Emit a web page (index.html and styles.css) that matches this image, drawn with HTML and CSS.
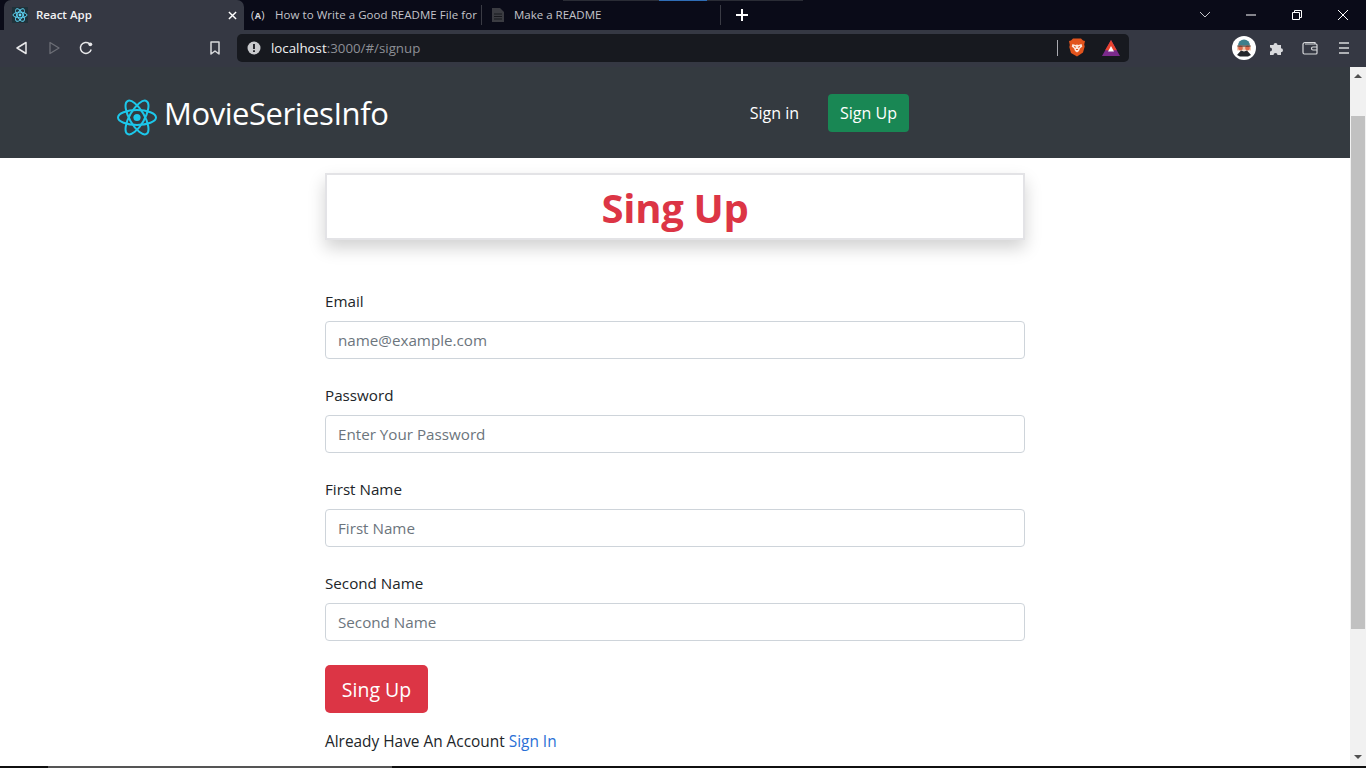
FILE: index.html
```html
<!DOCTYPE html>
<html lang="en">
<head>
<meta charset="utf-8">
<title>React App</title>
<link rel="stylesheet" href="styles.css">
</head>
<body>
<header class="chrome">
  <span class="peek"><span class="peek-blue"></span></span>
  <div class="tabstrip">
    <div class="tab active">
      <svg class="favicon" viewBox="0 0 16 16"><rect width="16" height="16" fill="#20323a"/><g fill="none" stroke="#61dafb" stroke-width=".9"><ellipse cx="8" cy="8" rx="7" ry="2.8"/><ellipse cx="8" cy="8" rx="7" ry="2.8" transform="rotate(60 8 8)"/><ellipse cx="8" cy="8" rx="7" ry="2.8" transform="rotate(120 8 8)"/></g><circle cx="8" cy="8" r="1.4" fill="#61dafb"/></svg>
      <span class="tab-title">React App</span>
      <svg class="tab-close" viewBox="0 0 10 10"><path d="M1 1l8 8M9 1l-8 8" stroke="#fff" stroke-width="1.6"/></svg>
    </div>
    <div class="tab tab-two">
      <span class="fcc">(<b>A</b>)</span>
      <span class="tab-title">How to Write a Good README File for</span>
    </div>
    <div class="tab tab-three">
      <svg class="doc" viewBox="0 0 12 14"><path d="M0 0h8l4 4v10H0z" fill="#3b3c42"/><path d="M2 6h8M2 8.500h8M2 11h8" stroke="#17181d" stroke-width="1"/></svg>
      <span class="tab-title">Make a README</span>
    </div>
    <svg class="newtab" viewBox="0 0 12 12"><path d="M6 0v12M0 6h12" stroke="#fff" stroke-width="2"/></svg>
    <div class="strip-space"></div>
    <svg class="win chev" viewBox="0 0 12 8"><path d="M1 1l5 5 5-5" fill="none" stroke="#c5c6ca" stroke-width="1"/></svg>
    <svg class="win" viewBox="0 0 12 12"><path d="M1 6h10" stroke="#fff" stroke-width="1"/></svg>
    <svg class="win" viewBox="0 0 12 12"><path d="M1.500 3.500h7v7h-7zM3.500 3.500v-2h7v7h-2" fill="none" stroke="#fff" stroke-width="1"/></svg>
    <svg class="win" viewBox="0 0 12 12"><path d="M1 1l10 10M11 1L1 11" stroke="#fff" stroke-width="1"/></svg>
  </div>
  <div class="toolbar">
    <svg class="tool back" viewBox="0 0 16 16"><path d="M12 2.500v11L3 8z" fill="none" stroke="#e8e8ea" stroke-width="1.500" stroke-linejoin="round"/></svg>
    <svg class="tool fwd" viewBox="0 0 16 16"><path d="M4 2.500v11L13 8z" fill="none" stroke="#6c6e76" stroke-width="1.300" stroke-linejoin="round"/></svg>
    <svg class="tool reload" viewBox="0 0 16 16"><path d="M13.200 9.500A5.500 5.500 0 1 1 11.500 3.700" fill="none" stroke="#e8e8ea" stroke-width="1.500"/><circle cx="12.300" cy="4.300" r="1.900" fill="#e8e8ea"/></svg>
    <svg class="tool bookmark" viewBox="0 0 16 16"><path d="M4 2h8v12l-4-3-4 3z" fill="none" stroke="#d8d9dc" stroke-width="1.500" stroke-linejoin="round"/></svg>
    <div class="omnibox">
      <svg class="info" viewBox="0 0 14 14"><circle cx="7" cy="7" r="6.500" fill="#c9cacd"/><path d="M7 3v5M7 9.300v1.600" stroke="#17181d" stroke-width="1.800"/></svg>
      <span class="url"><span class="host">localhost</span>:3000/#/signup</span>
      <span class="divider"></span>
      <svg class="brave" viewBox="0 0 16 18"><path d="M4 0h8l2 2 2 .5-.8 3.500.5 2-1.700 6L8 18l-6-3.500-1.700-6 .5-2L0 2.500 2 2z" fill="#e2541d"/><path d="M3.500 5.500L6.500 6.500 8 6l1.500.5 3-1 .8 2.500-2.300 2-1 2.500L8 14l-2-1.500-1-2.500-2.300-2z" fill="#fbe6dc"/><path d="M5 8l2 .8M11 8l-2 .8M7 11h2" stroke="#e2541d" stroke-width="1"/></svg>
      <svg class="bat" viewBox="0 0 18 16"><path d="M9 0l9 16H0z" fill="#7b2a8c"/><path d="M9 0l5.800 10.300H3.200z" fill="#e8432e"/><path d="M9 6l3 5.500H6z" fill="#fff"/></svg>
    </div>
    <div class="avatar">
      <svg viewBox="0 0 24 24"><circle cx="12" cy="12" r="12" fill="#fff"/><path d="M6 9.500a6 6 0 0 1 12 0z" fill="#3f7f8c"/><rect x="5" y="9.500" width="14" height="5" fill="#f1c9b0"/><circle cx="8.500" cy="12" r="2.400" fill="#dc6a4c"/><circle cx="15.500" cy="12" r="2.400" fill="#dc6a4c"/><path d="M5.500 10h13" stroke="#23262b" stroke-width="1"/><path d="M5 19l4-4.500 3 1 3-1 4 4.500-3 1.500H8z" fill="#23262b"/></svg>
    </div>
    <svg class="tool puzzle" viewBox="0 0 16 16"><path d="M1 5h3.500a2 2 0 1 1 4 0H12v3.300a2 2 0 1 1 0 4V15H8.500a2 2 0 1 0-4 0H1v-3.500a2 2 0 1 0 0-4z" fill="#d8d9dc"/></svg>
    <svg class="tool wallet" viewBox="0 0 16 14"><path d="M13 3V1.500H3A2 2 0 0 0 1 3.500v8a1.500 1.500 0 0 0 1.500 1.500H14a1 1 0 0 0 1-1V4a1 1 0 0 0-1-1H3" fill="none" stroke="#d8d9dc" stroke-width="1.200"/><path d="M15 6h-4a1.500 1.500 0 0 0 0 3h4" fill="none" stroke="#d8d9dc" stroke-width="1.200"/></svg>
    <svg class="tool menu" viewBox="0 0 12 14"><path d="M1 2h10M1 7h10M1 12h10" stroke="#d8d9dc" stroke-width="1.700"/></svg>
  </div>
</header>
<div class="viewport">
  <main class="page">
    <nav class="navbar">
      <a class="brand">
        <svg class="logo" viewBox="0 0 40 36"><g fill="none" stroke="#1cc7ea" stroke-width="2"><ellipse cx="20" cy="18" rx="19" ry="7.400"/><ellipse cx="20" cy="18" rx="19" ry="7.400" transform="rotate(60 20 18)"/><ellipse cx="20" cy="18" rx="19" ry="7.400" transform="rotate(120 20 18)"/></g><circle cx="20" cy="18" r="3.600" fill="#1cc7ea"/></svg>
        <span class="brand-name">MovieSeriesInfo</span>
      </a>
      <a class="nav-link">Sign in</a>
      <a class="nav-btn">Sign Up</a>
    </nav>
    <section class="content">
      <h1 class="heading">Sing Up</h1>
      <form class="form">
        <div class="field">
          <label class="label">Email</label>
          <input class="input" type="email" placeholder="name@example.com">
        </div>
        <div class="field">
          <label class="label">Password</label>
          <input class="input" type="password" placeholder="Enter Your Password">
        </div>
        <div class="field">
          <label class="label">First Name</label>
          <input class="input" type="text" placeholder="First Name">
        </div>
        <div class="field">
          <label class="label">Second Name</label>
          <input class="input" type="text" placeholder="Second Name">
        </div>
        <button class="submit" type="button">Sing Up</button>
        <p class="switch">Already Have An Account <a class="switch-link">Sign In</a></p>
      </form>
    </section>
  </main>
  <aside class="scrollbar">
    <span class="arrow up"></span>
    <span class="thumb"></span>
    <span class="arrow down"></span>
  </aside>
</div>
<footer class="taskbar"><span class="task-light"></span></footer>
</body>
</html>
```
FILE: styles.css
```css
* { box-sizing: border-box; }
html, body { margin: 0; height: 768px; overflow: hidden; }
body { font-family: "Open Sans", "Noto Sans", sans-serif; background: #fff; color: #212529; display: flex; flex-direction: column; }
svg { display: block; flex: none; }

.chrome { height: 67px; flex: none; background: #353843; position: relative; }
.peek { position: absolute; top: 0; left: 563px; width: 240px; height: 1px; background: #2a2c35; }
.peek-blue { position: absolute; top: 0; left: 96px; width: 48px; height: 1px; background: #2f6db5; }
.tabstrip { height: 30px; background: #0a0b18; display: flex; align-items: center; padding-left: 4px; }
.tab { height: 30px; display: flex; align-items: center; font-size: 12px; color: #c4c4ca; white-space: nowrap; }
.tab.active { width: 240px; background: #353843; border-radius: 7px 7px 0 0; padding: 0 7px 0 8px; color: #f2f2f4; font-weight: 600; }
.favicon { width: 16px; height: 16px; margin-right: 8px; }
.tab-title { flex: 1; font-size: 11.500px; line-height: 16px; margin-top: -1px; }
.tab-close { width: 9px; height: 9px; }
.tab-two { width: 238px; padding-left: 7px; padding-right: 3px; border-right: 1px solid #3a3b44; height: 20px; }
.tab-two .tab-title { letter-spacing: .05px; }
.fcc { font-size: 11px; width: 24px; flex: none; color: #d8d8dc; letter-spacing: .4px; margin-top: -1px; }
.fcc b { font-size: 9px; }
.tab-three { width: 239px; padding-left: 10px; border-right: 1px solid #3a3b44; height: 20px; }
.doc { width: 12px; height: 14px; margin-right: 10px; }
.newtab { width: 12px; height: 12px; margin-left: 15px; }
.strip-space { flex: 1; }
.win { width: 12px; height: 12px; margin-right: 34px; }
.chev { margin-right: 34px; }
.win:last-child { margin-right: 17px; }

.toolbar { height: 37px; display: flex; align-items: center; padding: 0 14px 2px 14px; }
.tool { width: 16px; height: 16px; }
.fwd { margin-left: 16px; }
.reload { margin-left: 16px; }
.bookmark { margin-left: 113px; }
.omnibox { width: 892px; height: 28px; margin-left: 14px; background: #17191f; border-radius: 5px; display: flex; align-items: center; padding: 0 9px 0 10px; }
.info { width: 14px; height: 14px; }
.url { margin-left: 10px; flex: 1; font-size: 13.300px; color: #8d8f96; }
.host { color: #f1f1f3; }
.divider { width: 1px; height: 16px; background: #a9aab0; }
.brave { width: 16px; height: 19px; margin-left: 11px; }
.bat { width: 18px; height: 16px; margin-left: 17px; }
.avatar { width: 24px; height: 24px; margin-left: 103px; }
.avatar svg { width: 24px; height: 24px; }
.puzzle { margin-left: 13px; }
.wallet { margin-left: 17px; }
.menu { width: 12px; margin-left: 20px; }

.viewport { height: 699px; flex: none; display: flex; overflow: hidden; }
.page { flex: 1; min-width: 0; }
.navbar { height: 91px; background: #343a40; display: flex; align-items: center; padding: 0 441px 0 117px; }
.brand { display: flex; align-items: center; flex: 1; color: #fff; font-size: 31px; letter-spacing: -.45px; }
.logo { width: 40px; height: 37px; margin-right: 7px; margin-top: 9px; }
.brand-name { margin-top: 1px; }
.nav-link { color: #fff; font-size: 16px; margin-right: 29px; }
.nav-btn { height: 38px; width: 81px; background: #198754; color: #fff; border-radius: 4px; font-size: 16px; display: flex; align-items: center; justify-content: center; }

.content { width: 700px; margin: 15px 0 0 325px; }
.heading { margin: 0 0 49px; height: 67px; border: 2px solid #e3e3e6; background: #fff; box-shadow: 0 8px 16px rgba(0,0,0,.18); color: #dc3545; font-size: 40px; font-weight: 700; line-height: 66px; text-align: center; letter-spacing: -.3px; }
.field { margin-bottom: 24px; }
.label { display: block; font-size: 15.200px; line-height: 24px; margin-bottom: 8px; }
.input { display: block; width: 100%; height: 38px; padding: 0 12px; border: 1px solid #ced4da; border-radius: 4px; font: inherit; font-size: 15.200px; color: #212529; background: #fff; }
.input::placeholder { color: #6c757d; opacity: 1; }
.submit { display: block; width: 103px; height: 48px; border: 0; border-radius: 5px; background: #dc3545; color: #fff; font: inherit; font-size: 19.500px; }
.switch { margin: 17px 0 0; font-size: 15.400px; line-height: 24px; }
.switch-link { color: #2a6fd6; }

.scrollbar { width: 16px; background: #f1f1f1; display: flex; flex-direction: column; align-items: center; padding: 7px 0; }
.arrow { width: 0; height: 0; border-left: 4px solid transparent; border-right: 4px solid transparent; flex: none; }
.up { border-bottom: 4px solid #505050; }
.down { border-top: 4px solid #505050; margin-top: auto; }
.thumb { width: 14px; height: 513px; margin-top: 38px; background: #c1c1c1; flex: none; }

.taskbar { height: 2px; flex: none; background: #101010; padding-left: 48px; }
.task-light { display: block; width: 344px; height: 2px; background: #555; }
```
